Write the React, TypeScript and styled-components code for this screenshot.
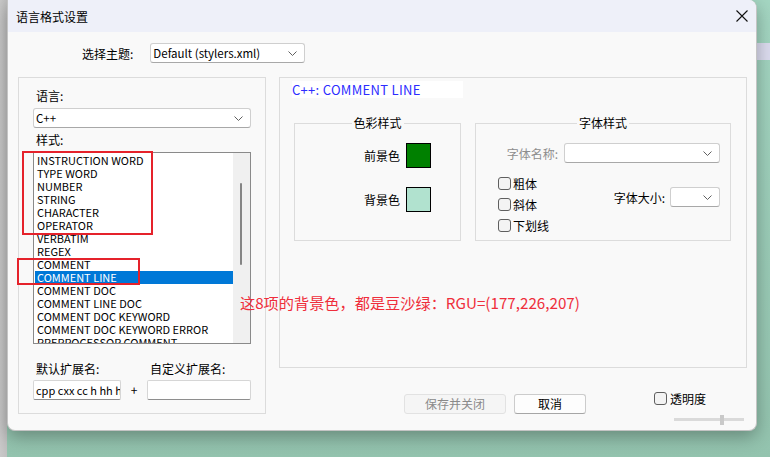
import React from "react";
import styled, { createGlobalStyle } from "styled-components";

const GlobalStyle = createGlobalStyle`
  html, body {
    margin: 0;
    padding: 0;
  }
  body {
    font-family: "Noto Sans CJK SC", "Noto Sans", sans-serif;
    font-size: 12px;
    color: #000;
  }
`;

const Page = styled.div`
  position: relative;
  width: 770px;
  height: 457px;
  overflow: hidden;
  box-sizing: border-box;
  padding-left: 7px;
  background:
    linear-gradient(#dcdcef, #dcdcef) no-repeat right 0 top 43px / 13px 17px,
    linear-gradient(to right, #c9c9c9 0, #c0c0c0 7px, transparent 7px),
    linear-gradient(to bottom, #a4d6c2 0%, #93c3ae 100%);
`;

const Dialog = styled.div`
  width: 750px;
  height: 431px;
  box-sizing: border-box;
  background: #f9f9f9;
  border: 1px solid #c4c4c4;
  border-top: none;
  border-radius: 0 8px 8px 8px;
  box-shadow: 0 6px 18px rgba(0, 0, 0, 0.3);
  overflow: hidden;
  display: flex;
  flex-direction: column;
`;

const TitleBar = styled.div`
  height: 32px;
  flex: none;
  display: flex;
  align-items: center;
  justify-content: space-between;
  padding: 0 8px 0 8px;
  background: #eef0f9;
  font-size: 12px;
`;

const Body = styled.div`
  padding: 11px 9px 0 10px;
`;

const ThemeRow = styled.div`
  display: flex;
  align-items: center;
  gap: 17px;
  padding-left: 64px;
  height: 20px;
`;

const SelectBox = styled.div<{ $w: number; $h?: number }>`
  width: ${(p) => p.$w}px;
  height: ${(p) => p.$h ?? 20}px;
  box-sizing: border-box;
  background: #fff;
  border: 1px solid #cfcfcf;
  border-bottom-color: #a8a8a8;
  border-radius: 3px;
  display: flex;
  align-items: center;
  justify-content: space-between;
  padding: 0 7px 0 2px;
  font-size: 11.5px;
  line-height: 18px;
  white-space: nowrap;
`;

const MainRow = styled.div`
  display: flex;
  gap: 13px;
  margin-top: 14px;
`;

const LeftGroup = styled.div`
  width: 248px;
  height: 337px;
  box-sizing: border-box;
  border: 1px solid #dcdcdc;
  padding: 10px 14px 0 14px;
`;

const FieldLabel = styled.div<{ $top: number }>`
  margin-top: ${(p) => p.$top}px;
  margin-bottom: 4px;
  padding-left: 3px;
  line-height: 16px;
  font-size: 12px;
`;

const ListBox = styled.div`
  position: relative;
  height: 192px;
  box-sizing: border-box;
  border: 1px solid #8a8a8a;
  background: #fff;
  display: flex;
  overflow: hidden;
`;

const Items = styled.div`
  flex: 1;
  padding: 1px 0 0 1px;
`;

const Item = styled.div<{ $sel?: boolean }>`
  height: 13px;
  line-height: 13px;
  font-size: 11px;
  padding-left: 2px;
  white-space: nowrap;
  background: ${(p) => (p.$sel ? "#0078d7" : "transparent")};
  color: ${(p) => (p.$sel ? "#fff" : "#000")};
`;

const ScrollTrack = styled.div`
  position: relative;
  width: 17px;
  background: #f0f0f0;
`;

const ScrollThumb = styled.div`
  position: absolute;
  left: 7px;
  top: 30px;
  width: 2px;
  height: 82px;
  border-radius: 1px;
  background: #858585;
`;

const ExtGrid = styled.div`
  display: grid;
  grid-template-columns: 88px 26px 104px;
  row-gap: 3px;
  margin-top: 17px;
`;

const ExtLabel = styled.div<{ $col: number }>`
  grid-column: ${(p) => p.$col};
  padding-left: 3px;
  line-height: 16px;
  white-space: nowrap;
`;

const TextInput = styled.div`
  height: 20px;
  box-sizing: border-box;
  background: #fff;
  border: 1px solid #d6d6d6;
  border-bottom-color: #8e8e8e;
  border-radius: 2px;
  padding-left: 2px;
  font-size: 11px;
  line-height: 18px;
  white-space: nowrap;
  overflow: hidden;
`;

const Plus = styled.div`
  text-align: center;
  line-height: 20px;
  font-size: 12px;
`;

const RightCol = styled.div`
  width: 468px;
  display: flex;
  flex-direction: column;
`;

const RightGroup = styled.div`
  height: 291px;
  box-sizing: border-box;
  border: 1px solid #dcdcdc;
  padding: 3px 15px 0 12px;
`;

const Header = styled.div`
  width: 171px;
  height: 17px;
  background: #fff;
  color: #2c2cff;
  font-size: 13px;
  letter-spacing: 0.3px;
  line-height: 17px;
  padding-left: 0;
  box-sizing: border-box;
  white-space: nowrap;
`;

const GroupsRow = styled.div`
  display: flex;
  gap: 14px;
  margin-top: 25px;
  padding-left: 2px;
`;

const Fieldset = styled.div<{ $w: number }>`
  position: relative;
  width: ${(p) => p.$w}px;
  height: 118px;
  box-sizing: border-box;
  border: 1px solid #dcdcdc;
`;

const Legend = styled.span`
  position: absolute;
  top: -9px;
  left: 50%;
  transform: translateX(-50%);
  padding: 0 2px;
  background: #f9f9f9;
  line-height: 16px;
  white-space: nowrap;
`;

const SwatchCol = styled.div`
  display: flex;
  flex-direction: column;
  align-items: flex-end;
  gap: 19px;
  padding: 19px 29px 0 0;
`;

const SwatchRow = styled.div`
  display: flex;
  align-items: center;
  gap: 6px;
`;

const Swatch = styled.div<{ $c: string }>`
  width: 25px;
  height: 25px;
  box-sizing: border-box;
  border: 1px solid #000;
  background: ${(p) => p.$c};
`;

const FontBody = styled.div`
  padding: 19px 10px 0 22px;
`;

const FontNameRow = styled.div`
  display: flex;
  align-items: center;
  justify-content: flex-end;
  gap: 6px;
`;

const Muted = styled.span`
  color: #8d8d8d;
`;

const FontLower = styled.div`
  display: flex;
  justify-content: space-between;
  margin-top: 10px;
`;

const CheckCol = styled.div`
  display: flex;
  flex-direction: column;
`;

const CheckRow = styled.div`
  display: flex;
  align-items: center;
  gap: 2px;
  height: 21px;
  white-space: nowrap;
`;

const Box = styled.span`
  width: 13px;
  height: 13px;
  box-sizing: border-box;
  border: 1px solid #5f5f5f;
  border-radius: 3px;
  background: #f3f3f3;
  flex: none;
`;

const SizeRow = styled.div`
  display: flex;
  align-items: center;
  gap: 5px;
  margin-top: 14px;
  align-self: flex-start;
`;

const BottomRow = styled.div`
  display: flex;
  align-items: flex-start;
  margin-top: 24px;
`;

const Buttons = styled.div`
  display: flex;
  gap: 8px;
  margin: 2px 0 0 125px;
`;

const Button = styled.div<{ $w: number; $disabled?: boolean }>`
  width: ${(p) => p.$w}px;
  height: 20px;
  box-sizing: border-box;
  border-radius: 3px;
  border: 1px solid ${(p) => (p.$disabled ? "#e2e2e2" : "#cccccc")};
  border-bottom-color: ${(p) => (p.$disabled ? "#e2e2e2" : "#a6a6a6")};
  background: ${(p) => (p.$disabled ? "#f5f5f5" : "#fdfdfd")};
  color: ${(p) => (p.$disabled ? "#8a8a8a" : "#000")};
  text-align: center;
  line-height: 18px;
  font-size: 12px;
`;

const Opacity = styled.div`
  margin-left: auto;
  margin-right: 3px;
  width: 90px;
  display: flex;
  flex-direction: column;
`;

const OpacityRow = styled.div`
  display: flex;
  align-items: center;
  gap: 3px;
  height: 13px;
`;

const Slider = styled.div`
  position: relative;
  margin: 10px 0 0 20px;
  width: 70px;
  height: 10px;
`;

const Track = styled.div`
  margin-top: 3px;
  height: 3px;
  background: #dadada;
`;

const Thumb = styled.div`
  position: absolute;
  left: 46px;
  top: 0;
  width: 4px;
  height: 10px;
  background: #c9c9c9;
`;

const RedBox = styled.div<{ $x: number; $y: number; $w: number; $h: number }>`
  position: absolute;
  left: ${(p) => p.$x}px;
  top: ${(p) => p.$y}px;
  width: ${(p) => p.$w}px;
  height: ${(p) => p.$h}px;
  box-sizing: border-box;
  border: 2px solid #e5222b;
`;

const Note = styled.div`
  position: absolute;
  left: 240px;
  top: 292px;
  color: #ef2e3b;
  font-size: 15.2px;
  line-height: 20px;
  white-space: nowrap;
`;

const Chevron = () => (
  <svg width="9" height="5" viewBox="0 0 9 5">
    <polyline points="0.5,0.5 4.5,4.5 8.5,0.5" fill="none" stroke="#606060" strokeWidth="1" />
  </svg>
);

const CloseIcon = () => (
  <svg width="12" height="12" viewBox="0 0 12 12">
    <path d="M0.5 0.5 L11.5 11.5 M11.5 0.5 L0.5 11.5" stroke="#111" strokeWidth="1.1" />
  </svg>
);

const styles = [
  "INSTRUCTION WORD",
  "TYPE WORD",
  "NUMBER",
  "STRING",
  "CHARACTER",
  "OPERATOR",
  "VERBATIM",
  "REGEX",
  "COMMENT",
  "COMMENT LINE",
  "COMMENT DOC",
  "COMMENT LINE DOC",
  "COMMENT DOC KEYWORD",
  "COMMENT DOC KEYWORD ERROR",
  "PREPROCESSOR COMMENT",
];

const App = () => {
  return (
    <Page>
      <GlobalStyle />
      <Dialog>
        <TitleBar>
          <span>语言格式设置</span>
          <CloseIcon />
        </TitleBar>
        <Body>
          <ThemeRow>
            <span>选择主题:</span>
            <SelectBox $w={155}>
              <span>Default (stylers.xml)</span>
              <Chevron />
            </SelectBox>
          </ThemeRow>
          <MainRow>
            <LeftGroup>
              <FieldLabel $top={0}>语言:</FieldLabel>
              <SelectBox $w={218}>
                <span>C++</span>
                <Chevron />
              </SelectBox>
              <FieldLabel $top={4}>样式:</FieldLabel>
              <ListBox>
                <Items>
                  {styles.map((s) => (
                    <Item key={s} $sel={s === "COMMENT LINE"}>
                      {s}
                    </Item>
                  ))}
                </Items>
                <ScrollTrack>
                  <ScrollThumb />
                </ScrollTrack>
              </ListBox>
              <ExtGrid>
                <ExtLabel $col={1}>默认扩展名:</ExtLabel>
                <ExtLabel $col={3}>自定义扩展名:</ExtLabel>
                <TextInput>cpp cxx cc h hh hpp hxx</TextInput>
                <Plus>+</Plus>
                <TextInput />
              </ExtGrid>
            </LeftGroup>
            <RightCol>
              <RightGroup>
                <Header>C++: COMMENT LINE</Header>
                <GroupsRow>
                  <Fieldset $w={167}>
                    <Legend>色彩样式</Legend>
                    <SwatchCol>
                      <SwatchRow>
                        <span>前景色</span>
                        <Swatch $c="#008000" />
                      </SwatchRow>
                      <SwatchRow>
                        <span>背景色</span>
                        <Swatch $c="#b1e2cf" />
                      </SwatchRow>
                    </SwatchCol>
                  </Fieldset>
                  <Fieldset $w={256}>
                    <Legend>字体样式</Legend>
                    <FontBody>
                      <FontNameRow>
                        <Muted>字体名称:</Muted>
                        <SelectBox $w={156}>
                          <span />
                          <Chevron />
                        </SelectBox>
                      </FontNameRow>
                      <FontLower>
                        <CheckCol>
                          <CheckRow>
                            <Box />
                            <span>粗体</span>
                          </CheckRow>
                          <CheckRow>
                            <Box />
                            <span>斜体</span>
                          </CheckRow>
                          <CheckRow>
                            <Box />
                            <span>下划线</span>
                          </CheckRow>
                        </CheckCol>
                        <SizeRow>
                          <span>字体大小:</span>
                          <SelectBox $w={50}>
                            <span />
                            <Chevron />
                          </SelectBox>
                        </SizeRow>
                      </FontLower>
                    </FontBody>
                  </Fieldset>
                </GroupsRow>
              </RightGroup>
              <BottomRow>
                <Buttons>
                  <Button $w={102} $disabled>
                    保存并关闭
                  </Button>
                  <Button $w={72}>取消</Button>
                </Buttons>
                <Opacity>
                  <OpacityRow>
                    <Box />
                    <span>透明度</span>
                  </OpacityRow>
                  <Slider>
                    <Track />
                    <Thumb />
                  </Slider>
                </Opacity>
              </BottomRow>
            </RightCol>
          </MainRow>
        </Body>
      </Dialog>
      <RedBox $x={22} $y={151} $w={131} $h={84} />
      <RedBox $x={17} $y={258} $w={123} $h={27} />
      <Note>这8项的背景色，都是豆沙绿：RGU=(177,226,207)</Note>
    </Page>
  );
};

export default App;
